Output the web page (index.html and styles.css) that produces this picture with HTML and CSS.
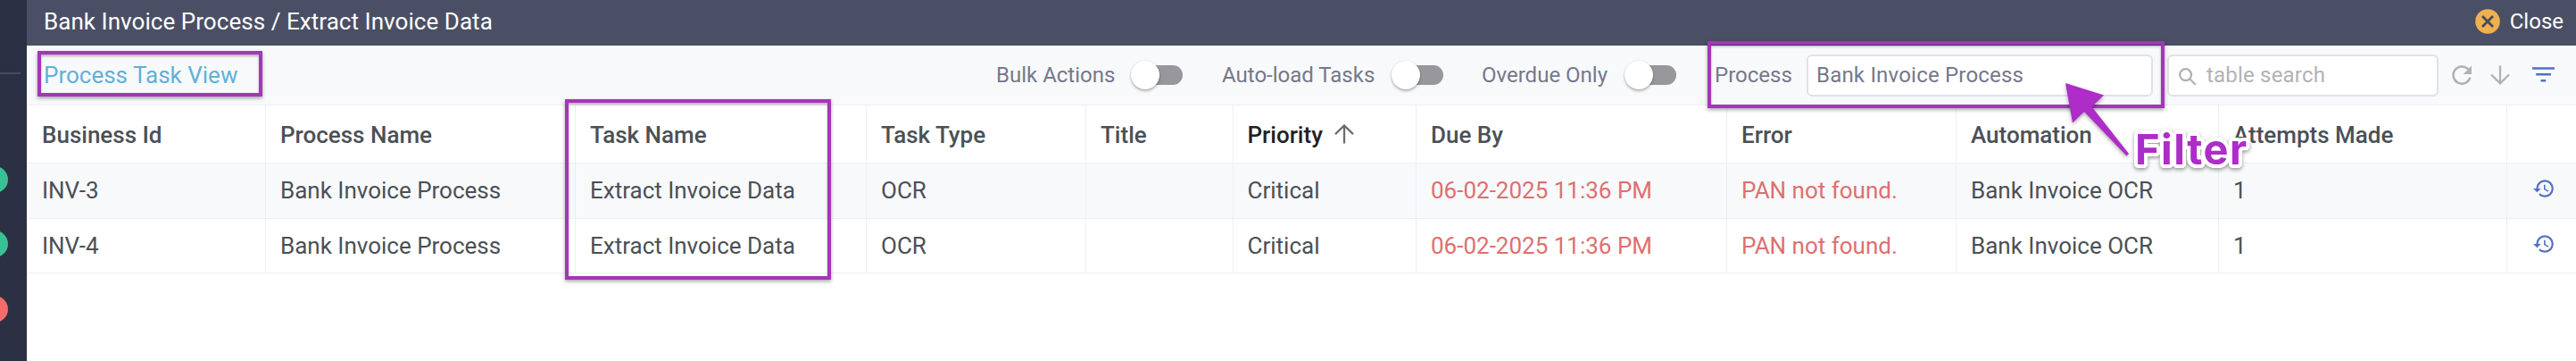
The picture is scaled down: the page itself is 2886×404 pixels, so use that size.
FILE: index.html
```html
<!DOCTYPE html>
<html lang="en">
<head>
<meta charset="utf-8">
<title>Bank Invoice Process</title>
<link rel="stylesheet" href="styles.css">
</head>
<body>
<svg class="defs" aria-hidden="true">
  <symbol id="history" viewBox="0 0 24 24"><path fill="currentColor" d="M13.5 8H12v5l4.28 2.54.72-1.21-3.5-2.08V8M13 3a9 9 0 0 0-9 9H1l3.96 4.03L9 12H6a7 7 0 0 1 7-7 7 7 0 0 1 7 7 7 7 0 0 1-7 7c-1.93 0-3.68-.79-4.94-2.06l-1.42 1.42A8.9 8.9 0 0 0 13 21a9 9 0 0 0 9-9 9 9 0 0 0-9-9"/></symbol>
</svg>
<div class="app">
  <aside class="sidebar">
    <hr class="sidebar-rule">
    <span class="dot dot-green"></span>
    <span class="dot dot-green"></span>
    <span class="dot dot-red"></span>
  </aside>
  <main class="main">
    <header class="header">
      <h1 class="title">Bank Invoice Process / Extract Invoice Data</h1>
      <button class="close">
        <svg class="close-icon" viewBox="0 0 28 28"><circle cx="14" cy="14" r="13.8" fill="#efb04f"/><path d="M8 8l12 12M20 8L8 20" stroke="#4a4a52" stroke-width="2.8"/></svg>
        <span>Close</span>
      </button>
    </header>
    <section class="toolbar">
      <a class="view-link">Process Task View</a>
      <label class="toggle toggle-bulk"><span>Bulk Actions</span><i class="switch"></i></label>
      <label class="toggle toggle-auto"><span>Auto-load Tasks</span><i class="switch"></i></label>
      <label class="toggle toggle-overdue"><span>Overdue Only</span><i class="switch"></i></label>
      <span class="filter-label">Process</span>
      <div class="field process-field">Bank Invoice Process</div>
      <div class="field search-field">
        <svg class="search-icon" viewBox="0 0 20 20"><circle cx="7.6" cy="7.6" r="6.4"/><path d="M12.2 12.2l6.6 6.6"/></svg>
        <span>table search</span>
      </div>
      <svg class="icon refresh" viewBox="0 0 22 22"><path d="M20.4 13.6A9.6 9.6 0 1 1 18.2 4.6" fill="none" stroke="#b2b2b4" stroke-width="2.5"/><path d="M22 .6V10h-9.4z" fill="#b2b2b4"/></svg>
      <svg class="icon down" viewBox="0 0 22 22"><path d="M11 .5v19M1 10.5l10 9.8 10-9.8" fill="none" stroke="#b2b2b4" stroke-width="2.3"/></svg>
      <svg class="icon filter" viewBox="0 0 25 17"><path d="M0 1.5h25M4.2 8.3h16.7M9.5 15.2h5.7" stroke="#5271c4" stroke-width="2.6"/></svg>
    </section>
    <div class="grid">
      <div class="row head">
        <div class="cell">Business Id</div><div class="cell">Process Name</div><div class="cell">Task Name</div><div class="cell">Task Type</div><div class="cell">Title</div>
        <div class="cell sorted">Priority<svg class="sort" viewBox="0 0 22 22"><path d="M11 21.5V2M1 11.2L11 1.5l10 9.7" fill="none" stroke="#6c6c6c" stroke-width="2.3"/></svg></div>
        <div class="cell">Due By</div><div class="cell">Error</div><div class="cell">Automation</div><div class="cell">Attempts Made</div><div class="cell"></div>
      </div>
      <div class="row odd">
        <div class="cell">INV-3</div><div class="cell">Bank Invoice Process</div><div class="cell">Extract Invoice Data</div><div class="cell">OCR</div><div class="cell"></div><div class="cell">Critical</div><div class="cell alert">06-02-2025 11:36 PM</div><div class="cell alert">PAN not found.</div><div class="cell">Bank Invoice OCR</div><div class="cell">1</div><div class="cell action"><svg class="history"><use href="#history"/></svg></div>
      </div>
      <div class="row">
        <div class="cell">INV-4</div><div class="cell">Bank Invoice Process</div><div class="cell">Extract Invoice Data</div><div class="cell">OCR</div><div class="cell"></div><div class="cell">Critical</div><div class="cell alert">06-02-2025 11:36 PM</div><div class="cell alert">PAN not found.</div><div class="cell">Bank Invoice OCR</div><div class="cell">1</div><div class="cell action"><svg class="history"><use href="#history"/></svg></div>
      </div>
    </div>
  </main>
</div>
<div class="mark mark-view"></div>
<div class="mark mark-task"></div>
<div class="mark mark-filter"></div>
<svg class="arrow" viewBox="0 0 76 92"><path d="M2 2L45 15.500 31.500 28.500 73 81 70.500 83.500 23 34 10 46.500z" fill="#ae2cc8"/></svg>
<div class="callout">Filter</div>
</body>
</html>
```
FILE: styles.css
```css
* { box-sizing: border-box; }
body { margin: 0; width: 2886px; height: 404px; overflow: hidden; position: relative; font: 400 26px/30px Roboto, sans-serif; color: #4b5056; background: #fff; }
.defs { display: none; }
.app { display: flex; height: 404px; }
.sidebar { width: 30px; background: #2c3044; overflow: hidden; display: flex; flex-direction: column; }
.sidebar-rule { margin: 81px 7px 103px 0; border: 0; height: 2px; flex: none; background: #454a60; }
.dot { width: 30px; height: 30px; border-radius: 50%; margin: 0 0 42px -21px; flex: none; }
.dot-green { background: #38c293; }
.dot-red { background: #f46c69; margin-top: 1px; }
.main { flex: 1; }
.header { height: 51px; background: #4a4f65; color: #fff; display: flex; align-items: center; justify-content: space-between; padding: 0 14px 3px 19px; }
.title { margin: 0; font-size: 26px; font-weight: 400; line-height: 30px; letter-spacing: .05px; }
.close { display: flex; align-items: center; gap: 11px; border: 0; padding: 0; background: none; color: #fff; font: 400 24px/28px Roboto, sans-serif; }
.close-icon { width: 28px; height: 28px; }
.toolbar { height: 67px; background: #f8f9fb; border-bottom: 1px solid #eeeff3; display: flex; align-items: center; padding-left: 19px; color: #75788a; font-size: 24px; }
.view-link { color: #5fb1d8; font-size: 26px; width: 1067px; }
.toggle { display: flex; align-items: center; justify-content: space-between; height: 30px; }
.toggle-bulk { width: 209px; margin-right: 44px; }
.toggle-auto { width: 248px; margin-right: 43px; }
.toggle-overdue { width: 218px; margin-right: 43px; }
.switch { width: 57px; height: 22px; border-radius: 11px; background: #98979b; display: flex; align-items: center; }
.switch::before { content: ""; width: 32px; height: 32px; border-radius: 50%; background: #fff; margin: -1px 0 0 -1px; flex: none; box-shadow: 0 2px 3px rgba(0,0,0,.28), 0 0 2px rgba(0,0,0,.12); }
.filter-label { width: 103px; }
.field { height: 47px; border: 2px solid #e1e1ea; border-radius: 6px; background: #fff; display: flex; align-items: center; letter-spacing: .2px; }
.process-field { width: 388px; padding-left: 9px; margin-right: 16px; }
.search-field { width: 304px; padding-left: 11px; gap: 11px; color: #b2b2b4; }
.search-icon { width: 20px; height: 20px; margin-top: 4px; fill: none; stroke: #b2b2b4; stroke-width: 2.3; }
.icon { height: 22px; width: 22px; flex: none; margin-top: -1px; }
.refresh { margin-left: 15px; }
.down { margin-left: 21px; }
.filter { width: 25px; height: 17px; margin-left: 25px; }
.row { display: grid; grid-template-columns: 268px 347px 326px 246px 164.500px 205.500px 348px 257px 294px 323px 1fr; height: 62px; border-bottom: 1px solid #eeeff3; }
.head { height: 65px; font-weight: 500; }
.odd { background: #f8f9fb; }
.row:last-child { height: 61px; }
.cell { border-right: 1px solid #eeeff3; padding: 0 0 0 16px; display: flex; align-items: center; white-space: nowrap; }
.cell:first-child { padding-left: 17px; }
.head .cell { padding-top: 2px; }
.odd .cell { padding-bottom: 1px; }
.cell:last-child { border-right: 0; }
.sorted { color: #212223; }
.sort { width: 22px; height: 22px; margin: -2px 0 0 13px; }
.alert { color: #dd706f; }
.row .action { padding: 0 0 5px 28px; color: #5271c4; }
.history { width: 26px; height: 26px; }
.mark { position: absolute; border: 4px solid #a535b9; box-shadow: 0 2px 4px rgba(0,0,0,.35), inset 0 2px 3px rgba(0,0,0,.28); }
.mark-view { left: 42px; top: 57px; width: 252px; height: 51px; }
.mark-task { left: 633px; top: 111px; width: 298px; height: 202px; }
.mark-filter { left: 1913px; top: 46px; width: 512px; height: 75px; }
.arrow { position: absolute; left: 2312px; top: 91px; width: 76px; height: 92px; overflow: visible; filter: drop-shadow(0 2px 2px rgba(0,0,0,.35)); }
.callout {
  position: absolute; left: 2392px; top: 138px; font: 700 47px/58px Inter, sans-serif; letter-spacing: 1.5px; color: #ae2cc8;
  text-shadow: 4px 0 #fff, 3.700px 1.500px #fff, 2.800px 2.800px #fff, 1.500px 3.700px #fff, 0 4px #fff, -1.500px 3.700px #fff, -2.800px 2.800px #fff, -3.700px 1.500px #fff, -4px 0 #fff, -3.700px -1.500px #fff, -2.800px -2.800px #fff, -1.500px -3.700px #fff, 0 -4px #fff, 1.500px -3.700px #fff, 2.800px -2.800px #fff, 3.700px -1.500px #fff;
  filter: drop-shadow(0 2px 2px rgba(0,0,0,.4));
}
```
